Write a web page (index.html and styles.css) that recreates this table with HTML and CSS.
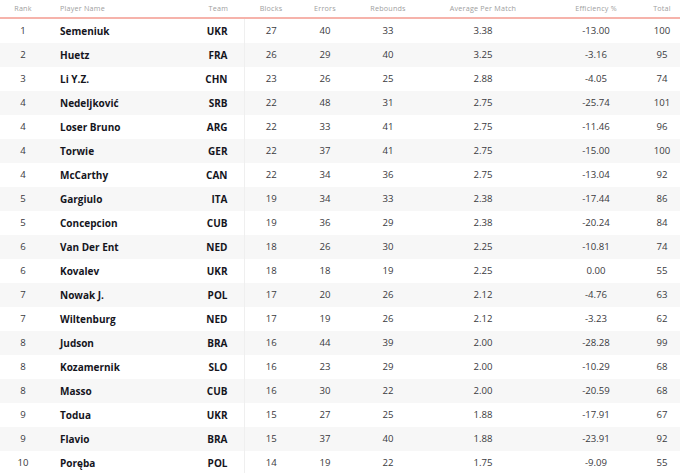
FILE: index.html
```html
<!DOCTYPE html>
<html>
<head>
<meta charset="utf-8">
<link rel="stylesheet" href="styles.css">
</head>
<body>
<table class="stats">
  <colgroup>
    <col class="c-rank"><col class="c-name"><col class="c-team"><col class="c-blocks"><col class="c-errors"><col class="c-reb"><col class="c-avg"><col class="c-eff"><col class="c-total">
  </colgroup>
  <thead>
    <tr>
      <th>Rank</th><th class="name">Player Name</th><th class="team">Team</th><th>Blocks</th><th>Errors</th><th>Rebounds</th><th>Average Per Match</th><th>Efficiency %</th><th class="total">Total</th>
    </tr>
  </thead>
  <tbody>
    <tr><td>1</td><td class="name">Semeniuk</td><td class="team">UKR</td><td class="sep">27</td><td>40</td><td>33</td><td>3.38</td><td>-13.00</td><td class="total">100</td></tr>
    <tr><td>2</td><td class="name">Huetz</td><td class="team">FRA</td><td class="sep">26</td><td>29</td><td>40</td><td>3.25</td><td>-3.16</td><td class="total">95</td></tr>
    <tr><td>3</td><td class="name">Li Y.Z.</td><td class="team">CHN</td><td class="sep">23</td><td>26</td><td>25</td><td>2.88</td><td>-4.05</td><td class="total">74</td></tr>
    <tr><td>4</td><td class="name">Nedeljković</td><td class="team">SRB</td><td class="sep">22</td><td>48</td><td>31</td><td>2.75</td><td>-25.74</td><td class="total">101</td></tr>
    <tr><td>4</td><td class="name">Loser Bruno</td><td class="team">ARG</td><td class="sep">22</td><td>33</td><td>41</td><td>2.75</td><td>-11.46</td><td class="total">96</td></tr>
    <tr><td>4</td><td class="name">Torwie</td><td class="team">GER</td><td class="sep">22</td><td>37</td><td>41</td><td>2.75</td><td>-15.00</td><td class="total">100</td></tr>
    <tr><td>4</td><td class="name">McCarthy</td><td class="team">CAN</td><td class="sep">22</td><td>34</td><td>36</td><td>2.75</td><td>-13.04</td><td class="total">92</td></tr>
    <tr><td>5</td><td class="name">Gargiulo</td><td class="team">ITA</td><td class="sep">19</td><td>34</td><td>33</td><td>2.38</td><td>-17.44</td><td class="total">86</td></tr>
    <tr><td>5</td><td class="name">Concepcion</td><td class="team">CUB</td><td class="sep">19</td><td>36</td><td>29</td><td>2.38</td><td>-20.24</td><td class="total">84</td></tr>
    <tr><td>6</td><td class="name">Van Der Ent</td><td class="team">NED</td><td class="sep">18</td><td>26</td><td>30</td><td>2.25</td><td>-10.81</td><td class="total">74</td></tr>
    <tr><td>6</td><td class="name">Kovalev</td><td class="team">UKR</td><td class="sep">18</td><td>18</td><td>19</td><td>2.25</td><td>0.00</td><td class="total">55</td></tr>
    <tr><td>7</td><td class="name">Nowak J.</td><td class="team">POL</td><td class="sep">17</td><td>20</td><td>26</td><td>2.12</td><td>-4.76</td><td class="total">63</td></tr>
    <tr><td>7</td><td class="name">Wiltenburg</td><td class="team">NED</td><td class="sep">17</td><td>19</td><td>26</td><td>2.12</td><td>-3.23</td><td class="total">62</td></tr>
    <tr><td>8</td><td class="name">Judson</td><td class="team">BRA</td><td class="sep">16</td><td>44</td><td>39</td><td>2.00</td><td>-28.28</td><td class="total">99</td></tr>
    <tr><td>8</td><td class="name">Kozamernik</td><td class="team">SLO</td><td class="sep">16</td><td>23</td><td>29</td><td>2.00</td><td>-10.29</td><td class="total">68</td></tr>
    <tr><td>8</td><td class="name">Masso</td><td class="team">CUB</td><td class="sep">16</td><td>30</td><td>22</td><td>2.00</td><td>-20.59</td><td class="total">68</td></tr>
    <tr><td>9</td><td class="name">Todua</td><td class="team">UKR</td><td class="sep">15</td><td>27</td><td>25</td><td>1.88</td><td>-17.91</td><td class="total">67</td></tr>
    <tr><td>9</td><td class="name">Flavio</td><td class="team">BRA</td><td class="sep">15</td><td>37</td><td>40</td><td>1.88</td><td>-23.91</td><td class="total">92</td></tr>
    <tr><td>10</td><td class="name">Poręba</td><td class="team">POL</td><td class="sep">14</td><td>19</td><td>22</td><td>1.75</td><td>-9.09</td><td class="total">55</td></tr>
  </tbody>
</table>
</body>
</html>
```

FILE: styles.css
```css
html, body {
  margin: 0;
  padding: 0;
  background: #ffffff;
}

body {
  font-family: "Open Sans", "Lato", sans-serif;
  color: #2b2b33;
  overflow: hidden;
}

.stats {
  width: 680px;
  table-layout: fixed;
  border-collapse: collapse;
  border-spacing: 0;
}

.c-rank { width: 46px; }
.c-name { width: 138px; }
.c-team { width: 60px; }
.c-blocks { width: 54px; }
.c-errors { width: 54px; }
.c-reb { width: 72px; }
.c-avg { width: 118px; }
.c-eff { width: 108px; }
.c-total { width: 30px; }

.stats th {
  height: 16px;
  padding: 0 0 1px;
  font-size: 7.2px;
  line-height: 10px;
  font-weight: 400;
  color: #a0a0a0;
  text-align: center;
  vertical-align: middle;
  border-bottom: 2px solid #f6b3ab;
  letter-spacing: 0.2px;
}

.stats td {
  height: 24px;
  padding: 0;
  font-size: 9.6px;
  line-height: 12px;
  color: #3a3a40;
  text-align: center;
  vertical-align: middle;
  white-space: nowrap;
}

.stats tbody tr:nth-child(even) td {
  background: #f7f7f7;
}

.stats .name {
  text-align: left;
  padding-left: 14px;
}

.stats td.name {
  font-size: 10px;
  font-weight: 700;
  color: #15151d;
}

.stats .team {
  text-align: right;
  padding-right: 16px;
}

.stats td.team {
  font-size: 10px;
  font-weight: 700;
  color: #15151d;
}

.stats td.sep {
  border-left: 1px solid #efefef;
}

.stats .total {
  padding-right: 6px;
}
```
